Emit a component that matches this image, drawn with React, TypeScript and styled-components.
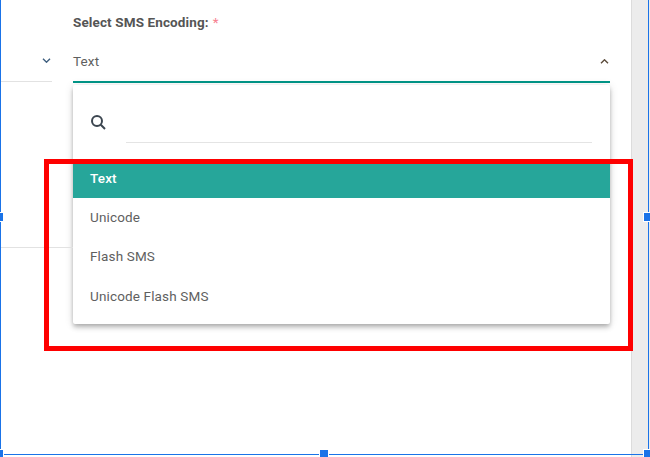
import React from 'react';
import styled, { createGlobalStyle } from 'styled-components';

const GlobalStyle = createGlobalStyle`
  html, body {
    margin: 0;
    padding: 0;
    background: #fff;
    overflow: hidden;
  }
  body {
    font-family: Roboto, "Liberation Sans", sans-serif;
    color: #555;
  }
`;

const Page = styled.div`
  position: relative;
  width: 650px;
  height: 457px;
  display: flex;
  overflow: hidden;
`;

const Form = styled.div`
  flex: 1;
  min-width: 0;
  padding-left: 1px;
`;

const FormRow = styled.div`
  display: grid;
  grid-template-columns: 51px 537px;
  column-gap: 21px;
`;

const SideField = styled.div`
  height: 82px;
  box-sizing: border-box;
  border-bottom: 1px solid #e2e2e2;
  display: flex;
  align-items: flex-end;
  justify-content: flex-end;
  padding: 0 0 18px 0;
`;

const Field = styled.div`
  position: relative;
`;

const Label = styled.label`
  display: block;
  height: 40px;
  padding-top: 14px;
  box-sizing: border-box;
  font-size: 13.5px;
  letter-spacing: .12px;
  line-height: 16px;
  font-weight: 700;
  color: #555;
`;

const Required = styled.span`
  color: #f7808f;
  margin-left: 4px;
  font-weight: 400;
`;

const SelectBox = styled.div`
  height: 43px;
  box-sizing: border-box;
  border-bottom: 2px solid #009688;
  display: flex;
  align-items: center;
  justify-content: space-between;
  padding: 1px 0 0 0;
  font-size: 13.5px;
  letter-spacing: .15px;
  color: #5f5f5f;
`;

const Chevron = styled.svg<{ $color: string }>`
  width: 9px;
  height: 5px;
  fill: none;
  stroke: ${p => p.$color};
  stroke-width: 1.4;
`;

const SideChevron = styled(Chevron)`
  transform: translateX(-1px);
`;

const SelectChevron = styled(Chevron)`
  transform: translateX(-1px);
`;

const Menu = styled.div`
  position: absolute;
  left: 0;
  top: 85px;
  width: 537px;
  height: 239px;
  background: #fff;
  border-radius: 2px;
  box-shadow: 0 2px 4px -1px rgba(0, 0, 0, .2), 0 4px 5px 0 rgba(0, 0, 0, .14), 0 1px 10px 0 rgba(0, 0, 0, .12);
`;

const SearchRow = styled.div`
  height: 74px;
  box-sizing: border-box;
  display: flex;
  align-items: flex-start;
  padding: 29px 18px 0 17px;
`;

const SearchIcon = styled.svg`
  width: 16px;
  height: 16px;
  fill: none;
  stroke: #3c4650;
  stroke-width: 2;
  flex: none;
`;

const SearchInput = styled.div`
  flex: 1;
  height: 28px;
  margin-left: 20px;
  border-bottom: 1px solid #e4e4e4;
`;

const Option = styled.div<{ $selected?: boolean }>`
  height: ${p => (p.$selected ? '39px' : '39.5px')};
  box-sizing: border-box;
  display: flex;
  align-items: center;
  padding: 0 0 2px 17px;
  font-size: 13.5px;
  letter-spacing: .15px;
  font-weight: ${p => (p.$selected ? 500 : 400)};
  color: ${p => (p.$selected ? '#fff' : '#5f5f5f')};
  background: ${p => (p.$selected ? '#26a69a' : '#fff')};
`;

const Scrollbar = styled.div`
  flex: none;
  width: 19px;
  box-sizing: border-box;
  background: #ececec;
  border-left: 1px solid #dcdcdc;
`;

const Divider = styled.div`
  position: absolute;
  left: 1px;
  top: 247px;
  width: 72px;
  height: 1px;
  background: #e2e2e2;
`;

const Highlight = styled.div`
  position: absolute;
  left: 44px;
  top: 159px;
  width: 589px;
  height: 192px;
  box-sizing: border-box;
  border: 5px solid #fe0000;
`;

const Frame = styled.div`
  position: absolute;
  inset: 0 1px 2px 0;
  border-left: 1px solid #1a73e8;
  border-right: 1px solid #1a73e8;
  border-bottom: 1px solid #1a73e8;
`;

const Handle = styled.div<{ $x: number; $y: number }>`
  position: absolute;
  left: ${p => p.$x}px;
  top: ${p => p.$y}px;
  width: 10px;
  height: 10px;
  background: #1a73e8;
  border: 1px solid #fff;
  box-sizing: border-box;
`;

const options = ['Text', 'Unicode', 'Flash SMS', 'Unicode Flash SMS'];

const handles = [
  { x: -6, y: 212 },
  { x: 643, y: 212 },
  { x: -6, y: 449 },
  { x: 319, y: 449 },
  { x: 643, y: 449 },
];

export default function App() {
  return (
    <Page>
      <GlobalStyle />
      <Form>
        <FormRow>
          <SideField>
            <SideChevron $color="#3f5f7f" viewBox="0 0 9 5">
              <path d="M1 .7l3.5 3.5L8 .7" />
            </SideChevron>
          </SideField>
          <Field>
            <Label>
              Select SMS Encoding:<Required>*</Required>
            </Label>
            <SelectBox>
              Text
              <SelectChevron $color="#5a4a3a" viewBox="0 0 9 5">
                <path d="M1 4.300L4.500 .8 8 4.300" />
              </SelectChevron>
            </SelectBox>
            <Menu>
              <SearchRow>
                <SearchIcon viewBox="0 0 16 16">
                  <circle cx="7" cy="7" r="5" />
                  <path d="M10.800 10.800L15 15" />
                </SearchIcon>
                <SearchInput />
              </SearchRow>
              {options.map(o => (
                <Option key={o} $selected={o === 'Text'}>{o}</Option>
              ))}
            </Menu>
          </Field>
        </FormRow>
      </Form>
      <Scrollbar />
      <Divider />
      <Highlight />
      <Frame />
      {handles.map(h => (
        <Handle key={`${h.x}-${h.y}`} $x={h.x} $y={h.y} />
      ))}
    </Page>
  );
}
